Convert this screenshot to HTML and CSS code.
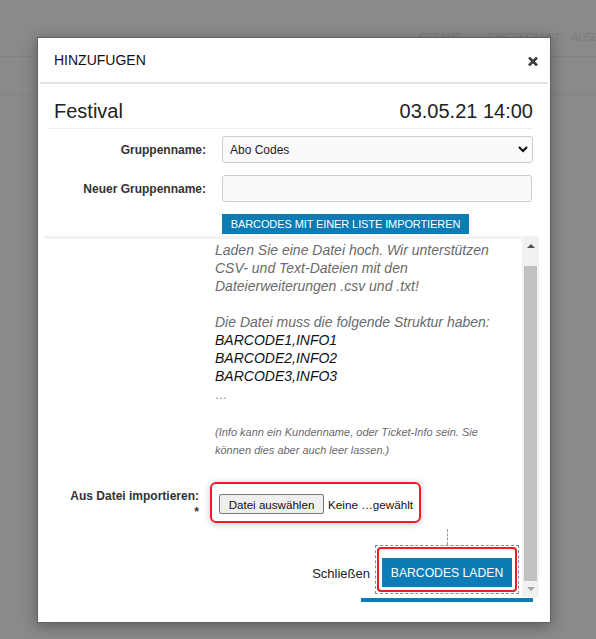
FILE: index.html
```html
<!DOCTYPE html>
<html>
<head>
    <title>Hinzufugen</title>
    <link rel="stylesheet" href="styles.css">
</head>
<body>
    <div class="page">
        <div class="page-nav">
            <span class="nav-item nav-total">GESAMT</span>
            <span class="nav-item nav-scanned">EINGESCANNT</span>
            <span class="nav-item">AUSG</span>
        </div>
        <div class="page-band"></div>
    </div>

    <div class="modal">
        <div class="modal-header">
            <h4>HINZUFUGEN</h4>
            <span class="close">
                <svg width="10" height="9" viewBox="0 0 10 9">
                    <path d="M1 0.5 L9 8.5 M9 0.5 L1 8.5" stroke="#3d3d3d" stroke-width="2.6" fill="none"/>
                </svg>
            </span>
        </div>

        <div class="event-row">
            <span>Festival</span>
            <span>03.05.21 14:00</span>
        </div>

        <div class="form-row first">
            <label for="groupName">Gruppenname:</label>
            <div class="select-wrap">
                <select id="groupName">
                    <option>Abo Codes</option>
                </select>
                <svg class="chevron" width="10" height="7" viewBox="0 0 10 7">
                    <path d="M1 1 L5 5 L9 1" stroke="#111" stroke-width="2.2" fill="none"/>
                </svg>
            </div>
        </div>

        <div class="form-row">
            <label for="newGroup">Neuer Gruppenname:</label>
            <input type="text" id="newGroup">
        </div>

        <div class="form-row">
            <span></span>
            <button class="btn-import">BARCODES MIT EINER LISTE IMPORTIEREN</button>
        </div>

        <div class="scroll-box">
            <div class="scroll-content">
                <div class="info">
                    Laden Sie eine Datei hoch. Wir unterstützen<br>
                    CSV- und Text-Dateien mit den<br>
                    Dateierweiterungen .csv und .txt!<br>
                    <br>
                    Die Datei muss die folgende Struktur haben:<br>
                    <span class="code">BARCODE1,INFO1</span><br>
                    <span class="code">BARCODE2,INFO2</span><br>
                    <span class="code">BARCODE3,INFO3</span><br>
                    <span class="dots">…</span>
                </div>
                <div class="info-small">
                    (Info kann ein Kundenname, oder Ticket-Info sein. Sie<br>
                    können dies aber auch leer lassen.)
                </div>

                <div class="file-row">
                    <label class="file-label">Aus Datei importieren:<br>*</label>
                    <div class="file-box">
                        <button class="file-btn">Datei auswählen</button>
                        <span class="file-name">Keine …gewählt</span>
                    </div>
                </div>

                <div class="connector"></div>
                <div class="actions">
                    <span class="link-close">Schließen</span>
                    <div class="focus-wrap">
                        <div class="focus-ring">
                            <button class="btn-load">BARCODES LADEN</button>
                        </div>
                    </div>
                </div>
            </div>
            <div class="scrollbar">
                <div class="sb-btn"><i class="arrow-up"></i></div>
                <div class="sb-track"><div class="sb-thumb"></div></div>
                <div class="sb-btn bottom"><i class="arrow-down"></i></div>
            </div>
        </div>

        <div class="blue-strip"></div>
    </div>
</body>
</html>
```

FILE: styles.css
```css
body {
    margin: 0;
    background: #8a8a8a;
    font-family: 'Liberation Sans', Arial, sans-serif;
    height: 639px;
    overflow: hidden;
}

/* page behind the dialog */
.page-nav {
    height: 57px;
    border-bottom: 1px solid #838383;
    display: flex;
    align-items: flex-start;
    padding: 32px 0 0 419px;
    box-sizing: border-box;
    font-size: 10px;
    color: #7b7b7b;
}

.nav-total {
    margin-right: 27px;
}

.nav-scanned {
    margin-right: 11px;
}

.page-band {
    height: 38px;
    border-bottom: 1px solid #858585;
}

/* dialog */
.modal {
    position: absolute;
    left: 37px;
    top: 37px;
    width: 514px;
    height: 586px;
    box-sizing: border-box;
    background: #fff;
    border: 1px solid #616161;
    box-shadow: 0 3px 14px rgba(0, 0, 0, 0.35);
}

.modal-header {
    display: flex;
    justify-content: space-between;
    align-items: center;
    height: 44px;
    margin: 0 2px;
    padding: 0 10px 0 14px;
    border-bottom: 2px solid #e3e3e3;
}

.modal-header h4 {
    margin: 0;
    font-size: 14px;
    font-weight: normal;
    color: #111;
}

.close {
    display: flex;
    margin-top: 3px;
}

.event-row {
    display: flex;
    justify-content: space-between;
    margin: 15px 17px 0 11px;
    padding: 0 0 5px 5px;
    border-bottom: 1px dotted #dedede;
    font-size: 20px;
    line-height: 24px;
    color: #222;
}

.form-row {
    display: grid;
    grid-template-columns: 168px 311px;
    column-gap: 16px;
    align-items: center;
    margin-top: 12px;
}

.form-row.first {
    margin-top: 7px;
}

.form-row label {
    text-align: right;
    font-size: 12px;
    font-weight: bold;
    color: #333;
}

.select-wrap {
    position: relative;
}

select, input {
    display: block;
    width: 100%;
    height: 27px;
    box-sizing: border-box;
    margin: 0;
    border: 1px solid #cdcdcd;
    border-radius: 3px;
    background: #fafafa;
    font-family: 'Liberation Sans', Arial, sans-serif;
    font-size: 12px;
    color: #222;
}

select {
    appearance: none;
    -webkit-appearance: none;
    padding: 0 7px;
}

input {
    width: 310px;
}

.chevron {
    position: absolute;
    right: 5px;
    top: 10px;
}

.btn-import {
    justify-self: start;
    height: 20px;
    width: 247px;
    padding: 0;
    border: none;
    background: #0b7cb5;
    color: #fff;
    font-family: 'Liberation Sans', Arial, sans-serif;
    font-size: 11px;
    letter-spacing: -0.1px;
}

/* scroll area */
.scroll-box {
    display: flex;
    height: 361px;
    margin: 2px 11px 0 6px;
}

.scroll-content {
    flex: 1;
    border-top: 3px solid #f2f2f2;
    overflow: hidden;
}

.info {
    padding: 2px 0 0 171px;
    font-size: 14px;
    line-height: 18px;
    font-style: italic;
    color: #6a6a6a;
}

.info .code {
    color: #111;
}

.info .dots {
    font-style: normal;
    font-size: 12px;
    color: #888;
}

.info-small {
    margin-top: 19px;
    padding-left: 171px;
    font-size: 11px;
    line-height: 18px;
    font-style: italic;
    color: #6a6a6a;
}

.file-row {
    display: grid;
    grid-template-columns: 155px auto;
    column-gap: 11px;
    align-items: start;
    margin-top: 23px;
}

.file-label {
    margin-top: 6px;
    text-align: right;
    font-size: 12px;
    line-height: 16px;
    font-weight: bold;
    color: #333;
}

.file-box {
    justify-self: start;
    display: flex;
    align-items: center;
    gap: 4px;
    padding: 10px 6px 7px 7px;
    border: 2px solid #ee1c25;
    border-radius: 6px;
    box-shadow: 0 1px 7px rgba(0, 0, 0, 0.22);
}

.file-btn {
    height: 20px;
    width: 105px;
    padding: 0;
    border: 1px solid #767676;
    border-radius: 2px;
    background: #efefef;
    font-family: 'Liberation Sans', Arial, sans-serif;
    font-size: 11.6px;
    color: #111;
}

.file-name {
    font-size: 11.7px;
    color: #111;
}

.connector {
    width: 0;
    height: 16px;
    margin: 6px 0 0 403px;
    border-left: 1px dashed #9a9a9a;
}

.actions {
    display: flex;
    justify-content: flex-end;
    align-items: center;
    gap: 5px;
    padding-right: 3px;
}

.link-close {
    margin-top: 7px;
    font-size: 13px;
    color: #222;
}

.focus-wrap {
    padding: 1px;
    border: 1px dashed #8a8a8a;
}

.focus-ring {
    padding: 9px 3px 3px 3px;
    border: 2px solid #ee1c25;
    border-radius: 4px;
}

.btn-load {
    display: block;
    width: 130px;
    height: 29px;
    padding: 0;
    border: none;
    background: #0b7cb5;
    color: #fff;
    font-family: 'Liberation Sans', Arial, sans-serif;
    font-size: 12.2px;
}

/* fake scrollbar */
.scrollbar {
    width: 17px;
    display: flex;
    flex-direction: column;
    background: #f1f1f1;
}

.sb-btn {
    height: 20px;
    display: flex;
    justify-content: center;
    align-items: center;
}

.sb-btn.bottom {
    height: 16px;
}

.arrow-up {
    width: 0;
    height: 0;
    border-left: 4px solid transparent;
    border-right: 4px solid transparent;
    border-bottom: 4px solid #505050;
}

.arrow-down {
    width: 0;
    height: 0;
    border-left: 4px solid transparent;
    border-right: 4px solid transparent;
    border-top: 4px solid #a3a3a3;
}

.sb-track {
    flex: 1;
    padding: 10px 2px 0;
}

.sb-thumb {
    height: 100%;
    background: #c1c1c1;
}

.blue-strip {
    width: 172px;
    height: 4px;
    margin: 1px 0 0 323px;
    background: #0b7cb5;
}
```
